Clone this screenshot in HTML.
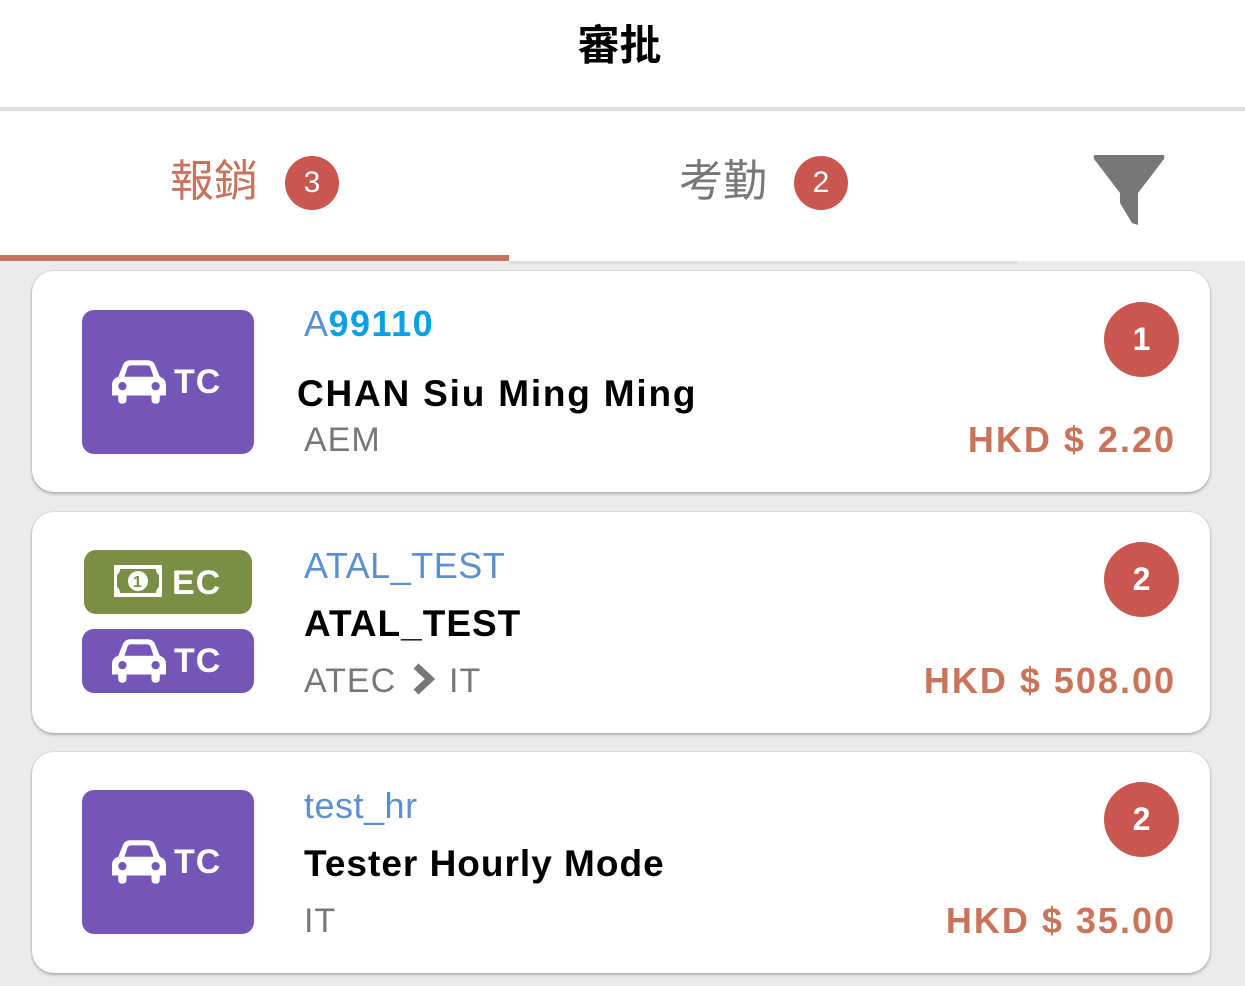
<!DOCTYPE html>
<html><head><meta charset="utf-8"><style>
*{margin:0;padding:0;box-sizing:border-box}
body{width:1245px;height:986px;background:#ebebeb;font-family:"Liberation Sans","Noto Sans CJK TC",sans-serif;position:relative;overflow:hidden}
.hdr{position:absolute;left:0;top:0;width:1245px;height:107px;background:#fff;text-align:center;font-size:42px;font-weight:bold;line-height:92px;color:#000;padding-right:6px}
.hl{position:absolute;left:0;top:107px;width:1245px;height:4px;background:#dedede}
.tabs{position:absolute;left:0;top:111px;width:1245px;height:150px;background:#fff}
.tab{position:absolute;top:43px;font-size:44px;line-height:56px}
.bdg{position:absolute;width:54px;height:54px;border-radius:50%;background:#c9574f;color:#fff;font-size:30px;text-align:center;line-height:54px}
.card{position:absolute;left:32px;width:1178px;height:221px;background:#fff;border-radius:22px;box-shadow:0 2px 3px rgba(0,0,0,.25),0 0 0 1px #ddd}
.tag{position:absolute;left:50px;border-radius:12px;color:#fff;font-weight:bold;font-size:34px;letter-spacing:1px}
.tc{background:#7455b8}.ec{background:#7a8f45}
.code{position:absolute;left:272px;font-size:36px;color:#5b8fcf;letter-spacing:0.5px}
.name{position:absolute;left:272px;font-size:37px;font-weight:bold;color:#000;letter-spacing:1px}
.sub{position:absolute;left:272px;font-size:34px;color:#777;letter-spacing:1px}
.num{position:absolute;right:31px;width:75px;height:75px;border-radius:50%;background:#c9574f;color:#fff;font-size:32px;font-weight:bold;text-align:center;line-height:75px}
.amt{position:absolute;right:34px;font-size:36px;font-weight:bold;color:#cb7358;letter-spacing:2px}
</style></head><body>
<div class="hdr">審批</div>
<div class="hl"></div>
<div class="tabs">
<div class="tab" style="left:170px;color:#c8735e">報銷</div>
<div class="bdg" style="left:285px;top:45px">3</div>
<div class="tab" style="left:679px;color:#777">考勤</div>
<div class="bdg" style="left:794px;top:45px">2</div>
<svg style="position:absolute;left:1093px;top:42px" width="72" height="72" viewBox="0 0 72 72"><path d="M2 2H70Q72 2 71 6L45 40V72L39 70L27 50V40L1 6Q0 2 2 2Z" fill="#777"/></svg>
<div style="position:absolute;left:0;top:144px;width:509px;height:6px;background:#c8735e"></div>
</div>
<div style="position:absolute;left:509px;top:261px;width:509px;height:3px;background:#ddd"></div>

<svg width="0" height="0" style="position:absolute"><defs><g id="car"><path d="M10 6Q12 0 18 0H34Q40 0 42 6L46 16Q52 18 52 24V34H46V38Q46 42 42 42Q38 42 38 38V34H14V38Q14 42 10 42Q6 42 6 38V34H0V24Q0 18 6 16Z" fill="#fff"/><path d="M12 16L15 7Q16 5 18 5H34Q36 5 37 7L40 16Z" fill="#7455b8"/><circle cx="10" cy="25" r="4" fill="#7455b8"/><circle cx="42" cy="25" r="4" fill="#7455b8"/></g></defs></svg>

<div class="card" style="top:271px">
<div class="tag tc" style="top:39px;width:172px;height:144px">
<svg style="position:absolute;left:30px;top:49px" width="54" height="46" viewBox="0 0 52 42"><use href="#car"/></svg>
<span style="position:absolute;left:92px;top:53px">TC</span></div>
<div class="code" style="top:32px"><span>A</span><span style="color:#0aa0e8;font-weight:bold;letter-spacing:1.5px">99110</span></div>
<div class="name" style="top:102px;left:265px;letter-spacing:1.8px">CHAN Siu Ming Ming</div>
<div class="sub" style="top:150px">AEM</div>
<div class="num" style="top:31px">1</div>
<div class="amt" style="top:148px">HKD $ 2.20</div>
</div>

<div class="card" style="top:512px">
<div class="tag ec" style="top:38px;width:168px;height:64px;left:52px">
<svg style="position:absolute;left:30px;top:15px" width="48" height="32" viewBox="0 0 48 32"><rect x="0" y="0" width="48" height="32" fill="#fff"/><path d="M6 4H42Q42 8 45 10V22Q42 24 42 28H6Q6 24 3 22V10Q6 8 6 4Z" fill="#7a8f45"/><circle cx="24" cy="16" r="10" fill="#fff"/><text x="24" y="22" font-size="16" font-weight="bold" text-anchor="middle" fill="#7a8f45" font-family="Liberation Sans">1</text></svg>
<span style="position:absolute;left:88px;top:14px">EC</span></div>
<div class="tag tc" style="top:117px;width:172px;height:64px">
<svg style="position:absolute;left:30px;top:9px" width="54" height="46" viewBox="0 0 52 42"><use href="#car"/></svg>
<span style="position:absolute;left:92px;top:13px">TC</span></div>
<div class="code" style="top:33px">ATAL_TEST</div>
<div class="name" style="top:91px">ATAL_TEST</div>
<div class="sub" style="top:150px">ATEC <svg width="24" height="32" viewBox="0 0 24 32" style="vertical-align:-3px;margin:0 4px"><path d="M5 3L19 16L5 29" stroke="#777" stroke-width="7" fill="none"/></svg> IT</div>
<div class="num" style="top:30px">2</div>
<div class="amt" style="top:148px">HKD $ 508.00</div>
</div>

<div class="card" style="top:752px">
<div class="tag tc" style="top:38px;width:172px;height:144px">
<svg style="position:absolute;left:30px;top:49px" width="54" height="46" viewBox="0 0 52 42"><use href="#car"/></svg>
<span style="position:absolute;left:92px;top:53px">TC</span></div>
<div class="code" style="top:33px">test_hr</div>
<div class="name" style="top:91px">Tester Hourly Mode</div>
<div class="sub" style="top:150px">IT</div>
<div class="num" style="top:30px">2</div>
<div class="amt" style="top:148px">HKD $ 35.00</div>
</div>
</body></html>
